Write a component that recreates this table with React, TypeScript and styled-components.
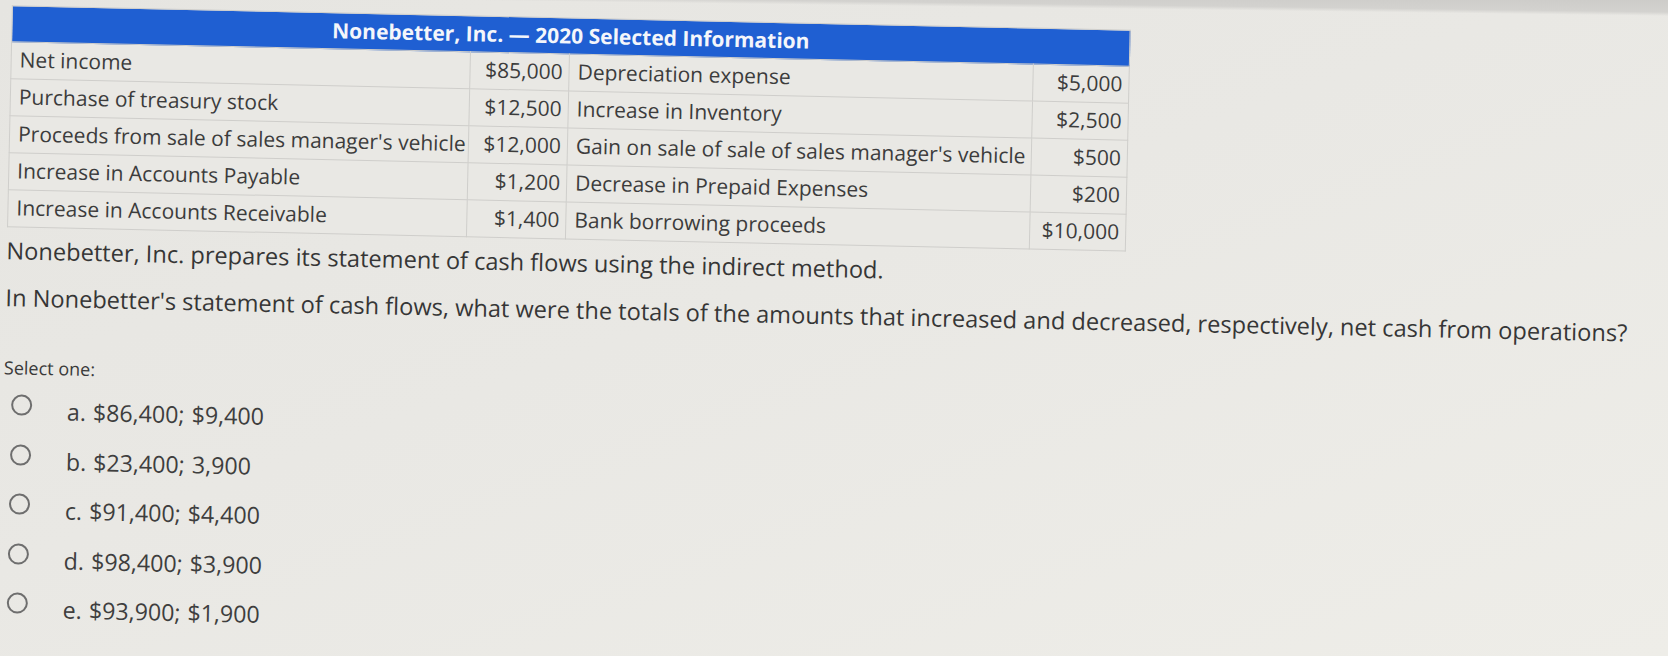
import React from "react";
import styled, { createGlobalStyle } from "styled-components";

const GlobalStyle = createGlobalStyle`
  html, body {
    margin: 0;
    padding: 0;
  }
  body {
    width: 1668px;
    height: 656px;
    overflow: hidden;
    font-family: "Open Sans", "Noto Sans", sans-serif;
    color: #3a3a3a;
    background:
      linear-gradient(180.75deg, #cdccc9 0px, #d3d2cf 12px, rgba(233,232,228,0) 16px),
      linear-gradient(160deg, #e6e5e1 0%, #e9e8e4 45%, #eeede8 100%);
  }
`;

const Page = styled.main`
  display: flex;
  flex-direction: column;
  align-items: flex-start;
  padding: 5px 0 0 12px;
  transform: rotate(1.25deg);
  transform-origin: 0 0;
`;

const DataTable = styled.table`
  border-collapse: collapse;
  width: 1118px;
  table-layout: fixed;
  border: 1px solid #cfcecb;
  background: #e9e8e4;
  font-size: 21px;
  color: #3c3c3c;
`;

const HeadCell = styled.th`
  height: 34px;
  padding: 0 0 1px 0;
  background: #1f5fd2;
  color: #f4f6fb;
  font-weight: 700;
  font-size: 21px;
  text-align: center;
  line-height: 33px;
`;

const Row = styled.tr`
  height: 37px;
`;

const Cell = styled.td<{ $align?: "left" | "right" }>`
  border: 1px solid #cfcecb;
  padding: ${(p) => (p.$align === "right" ? "0 6px 3px 4px" : "0 4px 3px 8px")};
  text-align: ${(p) => p.$align ?? "left"};
  vertical-align: middle;
  white-space: nowrap;
  line-height: 26px;
`;

const Paragraph = styled.p<{ $top: number }>`
  margin: ${(p) => p.$top}px 0 0 0;
  font-size: 23.6px;
  line-height: 30px;
  color: #363636;
  white-space: nowrap;
`;

const SelectLabel = styled.div`
  margin-top: 40px;
  font-size: 18px;
  line-height: 30px;
  color: #3a3a3a;
`;

const OptionList = styled.div`
  display: flex;
  flex-direction: column;
  gap: 19.5px;
  margin-top: 13px;
`;

const Option = styled.label`
  display: flex;
  align-items: flex-start;
  height: 30px;
  font-size: 23.2px;
  line-height: 30px;
  color: #3e3e3e;
  word-spacing: 1px;
`;

const Radio = styled.span`
  box-sizing: border-box;
  flex: none;
  width: 21px;
  height: 21px;
  margin: -1px 35px 0 8px;
  border: 2px solid #6e6e6e;
  border-radius: 50%;
  background: transparent;
`;

const rows: [string, string, string, string][] = [
  ["Net income", "$85,000", "Depreciation expense", "$5,000"],
  ["Purchase of treasury stock", "$12,500", "Increase in Inventory", "$2,500"],
  ["Proceeds from sale of sales manager's vehicle", "$12,000", "Gain on sale of sale of sales manager's vehicle", "$500"],
  ["Increase in Accounts Payable", "$1,200", "Decrease in Prepaid Expenses", "$200"],
  ["Increase in Accounts Receivable", "$1,400", "Bank borrowing proceeds", "$10,000"],
];

const options = [
  "a. $86,400; $9,400",
  "b. $23,400; 3,900",
  "c. $91,400; $4,400",
  "d. $98,400; $3,900",
  "e. $93,900; $1,900",
];

export default function App() {
  return (
    <>
      <GlobalStyle />
      <Page>
        <DataTable>
          <colgroup>
            <col style={{ width: 459 }} />
            <col style={{ width: 99 }} />
            <col style={{ width: 464 }} />
            <col style={{ width: 96 }} />
          </colgroup>
          <thead>
            <tr>
              <HeadCell colSpan={4}>Nonebetter, Inc. — 2020 Selected Information</HeadCell>
            </tr>
          </thead>
          <tbody>
            {rows.map((r) => (
              <Row key={r[0]}>
                <Cell>{r[0]}</Cell>
                <Cell $align="right">{r[1]}</Cell>
                <Cell>{r[2]}</Cell>
                <Cell $align="right">{r[3]}</Cell>
              </Row>
            ))}
          </tbody>
        </DataTable>
        <Paragraph $top={8}>
          Nonebetter, Inc. prepares its statement of cash flows using the indirect method.
        </Paragraph>
        <Paragraph $top={17}>
          In Nonebetter's statement of cash flows, what were the totals of the amounts that increased and decreased, respectively, net cash from operations?
        </Paragraph>
        <SelectLabel>Select one:</SelectLabel>
        <OptionList>
          {options.map((o) => (
            <Option key={o}>
              <Radio />
              {o}
            </Option>
          ))}
        </OptionList>
      </Page>
    </>
  );
}
